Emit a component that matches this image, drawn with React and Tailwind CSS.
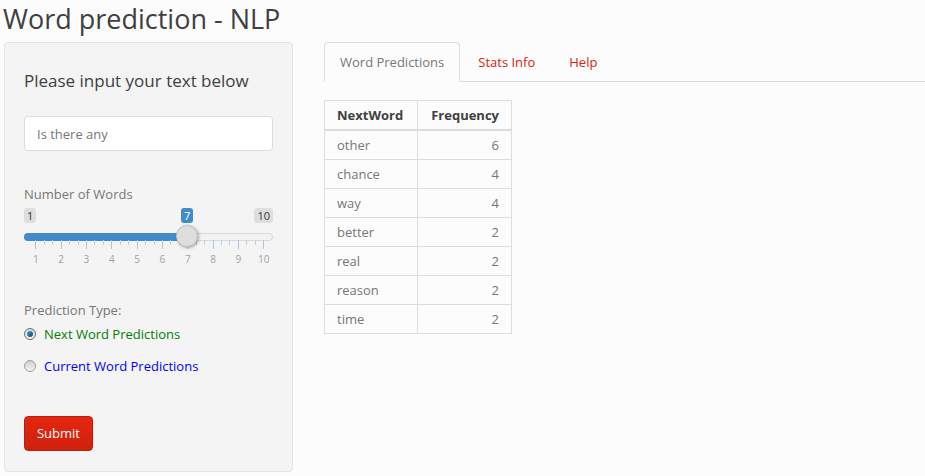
import { useState } from "react";

const rows = [
  ["other", 6],
  ["chance", 4],
  ["way", 4],
  ["better", 2],
  ["real", 2],
  ["reason", 2],
  ["time", 2],
];

function Slider({ value }) {
  const step = 25.33;
  const x0 = 11.3;
  const pos = (v) => x0 + (v - 1) * step;
  const ticks = [];
  for (let i = 1; i <= 10; i++) {
    ticks.push({ x: pos(i), major: true, n: i });
    if (i < 10) {
      ticks.push({ x: pos(i) + step / 3, major: false });
      ticks.push({ x: pos(i) + (2 * step) / 3, major: false });
    }
  }
  const hx = pos(value);
  return (
    <div className="relative h-[58px] w-full mt-[5px]">
      <span className="absolute left-0 top-0 h-[15px] px-[3px] rounded-[3px] bg-[#dedede] text-[#333] text-[11px] leading-[15px]">
        1
      </span>
      <span
        className="absolute top-0 h-[15px] w-[12px] text-center rounded-[3px] bg-[#428bca] text-white text-[11px] leading-[15px]"
        style={{ left: hx - 6 }}
      >
        {value}
      </span>
      <span className="absolute right-0 top-0 h-[15px] px-[3px] rounded-[3px] bg-[#dedede] text-[#333] text-[11px] leading-[15px]">
        10
      </span>
      <div className="absolute left-0 right-0 top-[25px] h-[8px] rounded-full bg-[#f3f3f3] border border-[#d8d8d8]" />
      <div
        className="absolute left-0 top-[25px] h-[8px] rounded-l-full bg-[#428bca]"
        style={{ width: hx }}
      />
      {ticks.map((t, i) => (
        <div
          key={i}
          className={
            t.major
              ? "absolute top-[32px] h-[9px] w-px bg-[#a9c6e4]"
              : "absolute top-[32px] h-[5px] w-px bg-[#bccfe3]"
          }
          style={{ left: t.x }}
        />
      ))}
      {ticks
        .filter((t) => t.major)
        .map((t) => (
          <span
            key={t.n}
            className="absolute top-[44px] w-[20px] -ml-[10px] text-center text-[10px] leading-[14px] text-[#a3a3a3]"
            style={{ left: t.x + 0.5 }}
          >
            {t.n}
          </span>
        ))}
      <div
        className="absolute top-[17px] w-[22px] h-[22px] rounded-full bg-[#dedede] border border-[#c2c2c2] shadow-[1px_1px_3px_rgba(0,0,0,0.3)]"
        style={{ left: hx - 11 }}
      />
    </div>
  );
}

function Radio({ checked, label, color }) {
  return (
    <div className="flex items-center h-[18px]">
      <span
        className={
          "w-[12px] h-[12px] rounded-full border flex items-center justify-center " +
          (checked
            ? "border-[#6b6b6b] bg-gradient-to-b from-[#d8d8d8] to-[#f8f8f8]"
            : "border-[#a0a0a0] bg-gradient-to-b from-[#d0d0d0] to-[#f4f4f4]")
        }
      >
        {checked && (
          <span className="w-[6px] h-[6px] rounded-full bg-gradient-to-br from-[#4aa3d8] to-[#0d3f6a]" />
        )}
      </span>
      <span className={"ml-[8px] text-[13px] leading-[18px] " + color}>{label}</span>
    </div>
  );
}

export default function App() {
  const [text, setText] = useState("Is there any");
  const [mode, setMode] = useState("next");

  return (
    <div
      className="min-h-screen bg-[#fcfcfc] text-[#777] text-[13px]"
      style={{ fontFamily: '"Open Sans", "Noto Sans", sans-serif' }}
    >
      <div className="h-[42px] pl-[3px] pt-[4px] text-[27px] leading-[30px] text-[#404040]">
        Word prediction - NLP
      </div>
      <div className="flex items-start pl-[4px]">
        <div className="w-[289px] h-[430px] shrink-0 bg-[#f4f4f4] border border-[#e3e3e3] rounded-[4px] p-[19px] flex flex-col">
          <div className="mt-[9px] text-[17px] leading-[20px] text-[#404040]">
            Please input your text below
          </div>
          <input
            value={text}
            onChange={(e) => setText(e.target.value)}
            className="mt-[25px] h-[35px] w-full bg-white border border-[#dcdcdc] rounded-[4px] px-[12px] text-[13px] text-[#777] outline-none"
          />
          <div className="mt-[34px] leading-[18px]">Number of Words</div>
          <Slider value={7} />
          <div className="mt-[35px] leading-[18px]">Prediction Type:</div>
          <div className="mt-[6px]" onClick={() => setMode("next")}>
            <Radio checked={mode === "next"} label="Next Word Predictions" color="text-[#008000]" />
          </div>
          <div className="mt-[14px]" onClick={() => setMode("current")}>
            <Radio checked={mode === "current"} label="Current Word Predictions" color="text-[#0000ff]" />
          </div>
          <div className="mt-[41px]">
            <button className="h-[35px] w-[69px] rounded-[4px] border border-[#b91d0c] bg-gradient-to-b from-[#e5260f] to-[#cf210e] text-white text-[13px]">
              Submit
            </button>
          </div>
        </div>
        <div className="flex-1 ml-[31px]">
          <div className="flex border-b border-[#dddddd] h-[40px]">
            <div className="h-[40px] px-[15px] py-[10px] leading-[18px] border border-[#dddddd] border-b-transparent rounded-t-[4px] bg-[#fcfcfc] text-[#777] mr-[2px]">
              Word Predictions
            </div>
            <div className="px-[16px] py-[11px] leading-[18px] text-[#d9230f] mr-[2px]">Stats Info</div>
            <div className="px-[16px] py-[11px] leading-[18px] text-[#d9230f]">Help</div>
          </div>
          <table className="mt-[18px] border-collapse border border-[#dddddd]">
            <thead>
              <tr className="border-b-2 border-[#dddddd]">
                <th className="w-[93px] border border-[#dddddd] border-b-2 px-[12px] pt-[5px] pb-[4px] leading-[19px] text-left font-bold text-[#404040]">
                  NextWord
                </th>
                <th className="w-[94px] border border-[#dddddd] border-b-2 px-[12px] pt-[5px] pb-[4px] leading-[19px] text-right font-bold text-[#404040]">
                  Frequency
                </th>
              </tr>
            </thead>
            <tbody>
              {rows.map(([w, f]) => (
                <tr key={w}>
                  <td className="border border-[#dddddd] px-[12px] py-[5px] leading-[18px]">{w}</td>
                  <td className="border border-[#dddddd] px-[12px] py-[5px] leading-[18px] text-right">{f}</td>
                </tr>
              ))}
            </tbody>
          </table>
        </div>
      </div>
    </div>
  );
}
